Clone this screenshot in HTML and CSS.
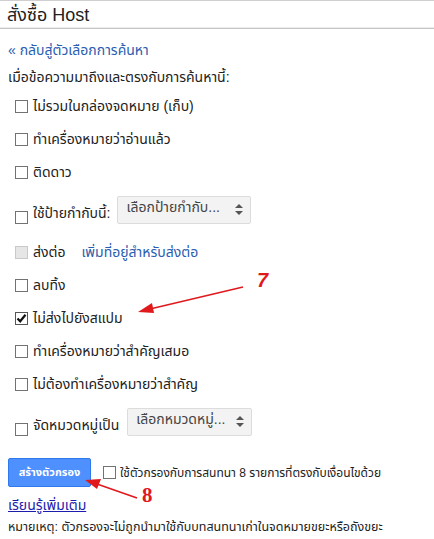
FILE: index.html
```html
<!DOCTYPE html>
<html lang="th">
<head>
    <meta charset="UTF-8">
    <meta name="viewport" content="width=device-width, initial-scale=1.0">
    <title>สั่งซื้อ Host</title>
    <link rel="stylesheet" href="styles.css">
</head>
<body>
    <div class="panel">
        <div class="panel-head">สั่งซื้อ Host</div>

        <div class="panel-body">
            <a class="back-link" href="#">« กลับสู่ตัวเลือกการค้นหา</a>
            <p class="lead">เมื่อข้อความมาถึงและตรงกับการค้นหานี้:</p>

            <div class="opt"><span class="cb"></span>ไม่รวมในกล่องจดหมาย (เก็บ)</div>
            <div class="opt"><span class="cb"></span>ทำเครื่องหมายว่าอ่านแล้ว</div>
            <div class="opt"><span class="cb"></span>ติดดาว</div>
            <div class="opt opt-select">
                <span class="cb"></span>ใช้ป้ายกำกับนี้:
                <span class="select select-label">เลือกป้ายกำกับ...<svg class="updown" width="8" height="11" viewBox="0 0 8 11"><path d="M4 0 L8 4 L0 4 Z M0 7 L8 7 L4 11 Z" fill="#555"/></svg></span>
            </div>
            <div class="opt"><span class="cb cb-off"></span>ส่งต่อ<a class="fwd-link" href="#">เพิ่มที่อยู่สำหรับส่งต่อ</a></div>
            <div class="opt"><span class="cb"></span>ลบทิ้ง</div>
            <div class="opt"><span class="cb cb-on"><svg width="11" height="11" viewBox="0 0 11 11"><path d="M1.5 5.5 L4.2 8.3 L9.5 1.8" fill="none" stroke="#111" stroke-width="2.2"/></svg></span>ไม่ส่งไปยังสแปม</div>
            <div class="opt"><span class="cb"></span>ทำเครื่องหมายว่าสำคัญเสมอ</div>
            <div class="opt"><span class="cb"></span>ไม่ต้องทำเครื่องหมายว่าสำคัญ</div>
            <div class="opt opt-select">
                <span class="cb"></span>จัดหมวดหมู่เป็น
                <span class="select select-cat">เลือกหมวดหมู่...<svg class="updown" width="8" height="11" viewBox="0 0 8 11"><path d="M4 0 L8 4 L0 4 Z M0 7 L8 7 L4 11 Z" fill="#555"/></svg></span>
            </div>

            <div class="actions">
                <button class="btn-create">สร้างตัวกรอง</button>
                <span class="cb"></span>
                <span class="apply-text">ใช้ตัวกรองกับการสนทนา 8 รายการที่ตรงกับเงื่อนไขด้วย</span>
            </div>

            <a class="learn-more" href="#">เรียนรู้เพิ่มเติม</a>
            <p class="note">หมายเหตุ: ตัวกรองจะไม่ถูกนำมาใช้กับบทสนทนาเก่าในจดหมายขยะหรือถังขยะ</p>
        </div>

        <!-- callouts -->
        <span class="mark mark-7">7</span>
        <span class="mark mark-8">8</span>
        <svg class="arrows" width="434" height="539" viewBox="0 0 434 539">
            <g stroke="#e0191d" stroke-width="1.6" fill="#e0191d">
                <line x1="243" y1="287" x2="150" y2="309"/>
                <path d="M138 312 L152 303 L154 313 Z" stroke="none"/>
                <line x1="137" y1="498" x2="97" y2="484"/>
                <path d="M85 480 L101 479 L97 489 Z" stroke="none"/>
            </g>
        </svg>
    </div>
</body>
</html>
```

FILE: styles.css
```css
* {
    margin: 0;
    padding: 0;
    box-sizing: border-box;
}

body {
    font-family: 'Liberation Sans', Arial, 'Noto Sans Thai', Tahoma, sans-serif;
    font-size: 14px;
    color: #222;
    background: white;
}

.panel {
    position: relative;
    width: 434px;
    height: 539px;
    border-top: 1px solid #cfcfcf;
    overflow: hidden;
}

.panel-head {
    height: 28px;
    padding: 4px 0 0 7px;
    font-size: 18px;
    line-height: 20px;
    color: #222;
    border-bottom: 1px solid #c6c6c6;
    box-shadow: 0 -1px 0 #ececec inset;
}

.panel-body {
    padding: 0 8px;
}

.back-link {
    display: block;
    margin-top: 12px;
    line-height: 18px;
    color: #2a5db0;
    text-decoration: none;
}

.lead {
    margin-top: 9px;
    margin-bottom: 4px;
    line-height: 18px;
    color: #222;
}

.opt {
    display: flex;
    align-items: center;
    height: 33px;
    padding-left: 7px;
    color: #222;
}

.opt-select {
    align-items: flex-end;
    height: 47px;
    padding-bottom: 12px;
}

.cb {
    flex: none;
    display: inline-flex;
    align-items: center;
    justify-content: center;
    width: 13px;
    height: 13px;
    margin-right: 5px;
    border: 1px solid #727272;
    background: white;
}

.cb-off {
    border-color: #c9c9c9;
    background: #e6e6e6;
}

.cb-on {
    border-color: #555;
}

.fwd-link {
    margin-left: 16px;
    color: #2a5db0;
    text-decoration: none;
}

.select {
    display: inline-flex;
    align-items: center;
    justify-content: space-between;
    height: 28px;
    padding: 0 7px 5px 8px;
    border: 1px solid #dcdcdc;
    border-radius: 2px;
    background: #f3f3f3;
    color: #444;
    font-size: 14px;
}

.select-label {
    width: 134px;
    margin-left: 7px;
}

.select-cat {
    width: 125px;
    margin-left: 8px;
}

.updown {
    flex: none;
    margin-top: 4px;
}

.actions {
    display: flex;
    align-items: center;
    margin-top: 10px;
}

.btn-create {
    width: 83px;
    height: 29px;
    margin-right: 12px;
    border: 1px solid #3079ed;
    border-radius: 2px;
    background: #4d90fe;
    color: white;
    font-family: inherit;
    font-size: 11px;
    font-weight: bold;
}

.actions .cb {
    margin-right: 4px;
}

.apply-text {
    font-size: 12px;
    color: #222;
}

.learn-more {
    display: block;
    margin-top: 8px;
    width: max-content;
    color: #1c1cae;
    font-size: 14px;
    line-height: 20px;
}

.note {
    margin-top: 4px;
    font-size: 12.5px;
    line-height: 16px;
    color: #222;
}

/* red callout numbers and arrows drawn over the form */
.arrows {
    position: absolute;
    left: 0;
    top: -1px;
    pointer-events: none;
}

.mark {
    position: absolute;
    color: #e0191d;
    font-weight: bold;
    line-height: 1;
}

.mark-7 {
    left: 257px;
    top: 269px;
    font-family: 'Liberation Sans', sans-serif;
    font-style: italic;
    font-size: 20px;
}

.mark-8 {
    left: 142px;
    top: 484px;
    font-family: 'Liberation Serif', serif;
    font-size: 21px;
}
```
